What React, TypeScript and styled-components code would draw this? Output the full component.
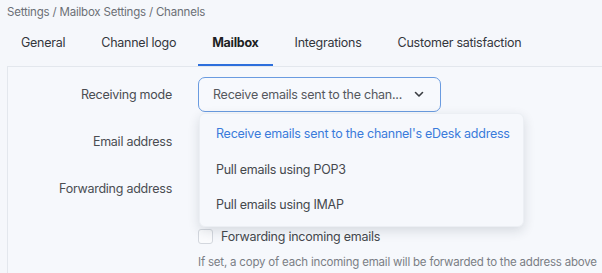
import React from "react";
import styled, { createGlobalStyle } from "styled-components";

const Global = createGlobalStyle`
  html, body { margin: 0; padding: 0; background: #f5f7fb; }
  body { font-family: Inter, "Noto Sans", Arial, sans-serif; overflow: hidden; }
  * { box-sizing: border-box; }
`;

const Page = styled.div`
  width: 602px;
  height: 273px;
  background: #f5f7fb;
  overflow: hidden;
`;

const Breadcrumb = styled.div`
  height: 23px;
  padding-left: 7px;
  padding-top: 1px;
  display: flex;
  align-items: center;
  font-size: 11.5px;
  letter-spacing: -0.2px;
  color: #6b6f76;
`;

const Tabs = styled.div`
  display: flex;
  gap: 8px;
  padding-left: 7px;
  height: 43px;
`;

const Tab = styled.div<{ $active?: boolean }>`
  padding: 0 14px 3px;
  display: flex;
  align-items: center;
  font-size: 12.5px;
  letter-spacing: -0.25px;
  color: ${(p) => (p.$active ? "#1d1f23" : "#33363b")};
  font-weight: ${(p) => (p.$active ? 700 : 400)};
  border-bottom: 2px solid ${(p) => (p.$active ? "#2d6fdc" : "transparent")};
`;

const Panel = styled.div`
  margin-left: 7px;
  border-left: 1px solid #e3e7ed;
  border-top: 1px solid #e3e7ed;
  background: #f6f8fc;
  padding-top: 4px;
  height: 300px;
`;

const Row = styled.div`
  display: grid;
  grid-template-columns: 164px 1fr;
  column-gap: 26px;
  height: 47px;
  align-items: center;
`;

const Label = styled.div`
  text-align: right;
  font-size: 12.5px;
  letter-spacing: -0.25px;
  color: #4a4d52;
`;

const Field = styled.div`
  position: relative;
`;

const Select = styled.div`
  width: 243px;
  height: 35px;
  border: 1px solid #6a9be0;
  border-radius: 7px;
  background: #f7f9fd;
  display: flex;
  align-items: center;
  justify-content: space-between;
  padding: 0 16px 0 14px;
  font-size: 12.5px;
  letter-spacing: -0.25px;
  color: #55585d;
  white-space: nowrap;
`;

const Menu = styled.div`
  position: absolute;
  top: calc(100% + 1px);
  left: 1px;
  width: 325px;
  padding: 2px 0 3px;
  background: #f6f8fc;
  border-radius: 6px;
  border: 1px solid #eceff4;
  box-shadow: 0 4px 12px rgba(30, 40, 60, 0.14);
  z-index: 5;
`;

const Option = styled.div<{ $selected?: boolean }>`
  height: 35.5px;
  display: flex;
  align-items: center;
  padding-left: 16px;
  font-size: 12.5px;
  letter-spacing: -0.25px;
  white-space: nowrap;
  color: ${(p) => (p.$selected ? "#3a7bdb" : "#45484d")};
`;

const CheckRow = styled.div`
  display: grid;
  grid-template-columns: 164px 1fr;
  column-gap: 26px;
  padding-top: 16px;
`;

const CheckLine = styled.label`
  display: flex;
  align-items: center;
  gap: 8px;
  font-size: 12.5px;
  letter-spacing: -0.25px;
  color: #45484d;
  height: 16px;
`;

const Box = styled.span`
  width: 15px;
  height: 15px;
  border: 1px solid #d3d7de;
  border-radius: 3px;
  background: #fafbfd;
`;

const Help = styled.div`
  margin-top: 11px;
  font-size: 11.5px;
  letter-spacing: -0.2px;
  color: #7a7e85;
  white-space: nowrap;
`;

export default function App() {
  return (
    <Page>
      <Global />
      <Breadcrumb>Settings / Mailbox Settings / Channels</Breadcrumb>
      <Tabs>
        <Tab>General</Tab>
        <Tab>Channel logo</Tab>
        <Tab $active>Mailbox</Tab>
        <Tab>Integrations</Tab>
        <Tab>Customer satisfaction</Tab>
      </Tabs>
      <Panel>
        <Row>
          <Label>Receiving mode</Label>
          <Field>
            <Select>
              <span>Receive emails sent to the chan...</span>
              <svg width="10" height="7" viewBox="0 0 10 7">
                <path d="M1.5 1.5 L5 5 L8.5 1.5" fill="none" stroke="#3a3d42" strokeWidth="1.6" strokeLinecap="round" strokeLinejoin="round" />
              </svg>
            </Select>
            <Menu>
              <Option $selected>Receive emails sent to the channel's eDesk address</Option>
              <Option>Pull emails using POP3</Option>
              <Option>Pull emails using IMAP</Option>
            </Menu>
          </Field>
        </Row>
        <Row>
          <Label>Email address</Label>
          <div />
        </Row>
        <Row>
          <Label>Forwarding address</Label>
          <div />
        </Row>
        <CheckRow>
          <div />
          <div>
            <CheckLine>
              <Box />
              Forwarding incoming emails
            </CheckLine>
            <Help>If set, a copy of each incoming email will be forwarded to the address above</Help>
          </div>
        </CheckRow>
      </Panel>
    </Page>
  );
}
